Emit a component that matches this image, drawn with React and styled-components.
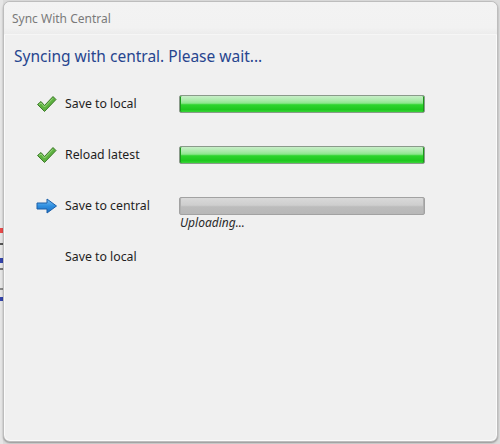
import React from "react";
import styled, { createGlobalStyle } from "styled-components";

const Global = createGlobalStyle`
  html, body { margin: 0; padding: 0; }
  body {
    width: 500px; height: 444px; overflow: hidden;
    background: #dcdcdc;
    font-family: "Noto Sans", "Open Sans", sans-serif;
  }
`;

const Screen = styled.div`
  display: flex;
  width: 500px;
  height: 444px;
`;

const BackStrip = styled.div`
  width: 3px;
  display: flex;
  flex-direction: column;
  background: #e6e6e6;
  padding-top: 228px;
`;

const Mark = styled.div`
  height: ${p => p.h || 4}px;
  margin-bottom: ${p => p.gap || 0}px;
  background: ${p => p.c};
`;

const Window = styled.div`
  flex: 1;
  margin: 1px 2px 2px 0;
  border: 1px solid #bdbdbd;
  border-radius: 7px;
  background: #f0f0f0;
  box-shadow: inset 0 0 0 1px #fbfbfb, 0 1px 2px rgba(0,0,0,0.35);
  display: flex;
  flex-direction: column;
  overflow: hidden;
`;

const TitleBar = styled.div`
  height: 32px;
  padding: 0 0 0 8px;
  display: flex;
  align-items: center;
  background: linear-gradient(#f3f3f3, #f2f2f2 80%, #ececec);
  color: #7a7a7a;
  font-size: 12px;
  border-bottom: 1px solid #f6f6f6;
`;

const Heading = styled.div`
  padding: 10px 0 0 10px;
  color: #27458f;
  font-size: 15.5px;
  height: 30px;
`;

const Steps = styled.div`
  display: grid;
  grid-template-columns: 29px 114px 246px;
  grid-auto-rows: 51px;
  padding: 19px 0 0 32px;
`;

const IconCell = styled.div`
  display: flex;
  align-items: center;
  height: 20px;
`;

const Label = styled.div`
  font-size: 12.3px;
  color: #1e1e1e;
  height: 20px;
  line-height: 20px;
`;

const BarCell = styled.div`
  display: flex;
  flex-direction: column;
  padding-top: 1px;
`;

const Bar = styled.div`
  height: 18px;
  box-sizing: border-box;
  border: 1px solid ${p => (p.done ? "#8a9a8a" : "#a2a2a2")};
  border-radius: 2px;
  background: ${p =>
    p.done
      ? "linear-gradient(#c8eec8 0%, #a6eaa6 30%, #8ce68c 45%, #2ed42e 55%, #1ec81e 85%, #3ad43a 100%)"
      : "linear-gradient(#d9d9d9 0%, #cecece 45%, #bcbcbc 55%, #b8b8b8 100%)"};
  box-shadow: inset 1px 0 0 ${p => (p.done ? "#1a9a1a" : "#b0b0b0")}, inset -1px 0 0 ${p => (p.done ? "#1a9a1a" : "#b0b0b0")};
`;

const Status = styled.div`
  font-size: 12px;
  font-style: italic;
  color: #2a2a2a;
  padding-left: 1px;
  line-height: 16px;
`;

const Check = () => (
  <svg width="21" height="18" viewBox="0 0 21 18">
    <path d="M1.5 9.5 L5 6.5 L8.5 10.5 L17 1.5 L20 4.5 L8.5 16.5 Z" fill="#5cb13f" stroke="#3d7a2a" strokeWidth="1" strokeLinejoin="round" />
    <path d="M3 9.5 L5 8 L8.5 12 L17 3.2" fill="none" stroke="#9bd77f" strokeWidth="1" />
  </svg>
);

const Arrow = () => (
  <svg width="22" height="16" viewBox="0 0 22 16">
    <defs>
      <linearGradient id="ag" x1="0" y1="0" x2="0" y2="1">
        <stop offset="0" stopColor="#7ec3f5" />
        <stop offset="0.5" stopColor="#2f8fe0" />
        <stop offset="1" stopColor="#1d6fc2" />
      </linearGradient>
    </defs>
    <path d="M1 5 L11 5 L11 1 L20.5 8 L11 15 L11 11 L1 11 Z" fill="url(#ag)" stroke="#1b5fa8" strokeWidth="1" strokeLinejoin="round" />
  </svg>
);

const steps = [
  { label: "Save to local", state: "done" },
  { label: "Reload latest", state: "done" },
  { label: "Save to central", state: "active", status: "Uploading..." },
  { label: "Save to local", state: "pending" },
];

export default function App() {
  return (
    <>
      <Global />
      <Screen>
        <BackStrip>
          <Mark c="#e84a4a" h={5} gap={10} />
          <Mark c="#555" h={2} gap={13} />
          <Mark c="#3344aa" h={5} gap={5} />
          <Mark c="#777" h={2} gap={18} />
          <Mark c="#888" h={2} gap={7} />
          <Mark c="#3344aa" h={4} />
        </BackStrip>
        <Window>
          <TitleBar>Sync With Central</TitleBar>
          <Heading>Syncing with central. Please wait...</Heading>
          <Steps>
            {steps.map((s, i) => (
              <React.Fragment key={i}>
                <IconCell>{s.state === "done" ? <Check /> : s.state === "active" ? <Arrow /> : null}</IconCell>
                <Label>{s.label}</Label>
                <BarCell>
                  {s.state !== "pending" && <Bar done={s.state === "done"} />}
                  {s.status && <Status>{s.status}</Status>}
                </BarCell>
              </React.Fragment>
            ))}
          </Steps>
        </Window>
      </Screen>
    </>
  );
}
